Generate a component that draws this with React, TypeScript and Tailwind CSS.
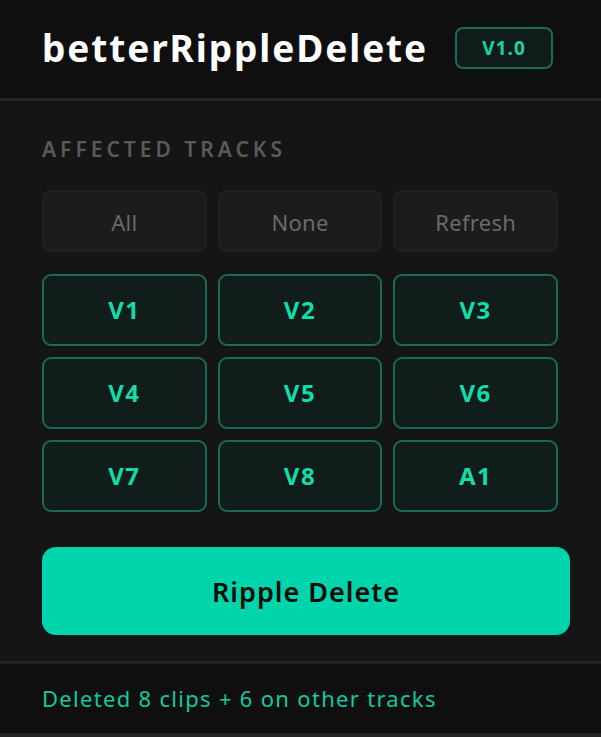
import React from 'react';

const tracks = ['V1', 'V2', 'V3', 'V4', 'V5', 'V6', 'V7', 'V8', 'A1'];

export default function App() {
    return (
        <div className="min-h-screen bg-[#151515] font-['Noto_Sans','Open_Sans',sans-serif] flex flex-col">
            <header className="h-[101px] bg-[#0f0f0f] border-b-[3px] border-[#232323] flex items-center px-[42px] gap-[27px]">
                <h1 className="text-[37px] font-bold text-white leading-none tracking-[1.9px] -mt-[4px]">betterRippleDelete</h1>
                <span className="h-[42px] w-[98px] -mt-[2px] flex items-center justify-center rounded-[8px] border-2 border-[#176b58] bg-[#0f1c19] text-[#19d3a2] text-[19px] tracking-[1px] font-bold">
                    V1.0
                </span>
            </header>

            <main className="px-[42px] pt-[36px]">
                <div className="text-[21px] leading-[24px] font-semibold tracking-[4px] text-[#5a5a5a]">AFFECTED TRACKS</div>

                <div className="mt-[29px] w-[516px] grid grid-cols-3 gap-x-[11px]">
                    {['All', 'None', 'Refresh'].map((b) => (
                        <button key={b} className="h-[62px] pt-[3px] rounded-[9px] border-2 border-[#212121] bg-[#1c1c1c] text-[#6a6a6a] text-[22px] tracking-[0.3px]">
                            {b}
                        </button>
                    ))}
                </div>

                <div className="mt-[22px] w-[516px] grid grid-cols-3 gap-x-[11px] gap-y-[11px]">
                    {tracks.map((t) => (
                        <button key={t} className="h-[72px] rounded-[9px] border-2 border-[#176b58] bg-[#111d1b] text-[#12dcaa] text-[24px] tracking-[1.5px] font-bold">
                            {t}
                        </button>
                    ))}
                </div>

                <button className="mt-[35px] w-[528px] h-[88px] pt-[2px] rounded-[14px] bg-[#00d4ab] text-[#0a0a0a] text-[27px] tracking-[1px] font-semibold">
                    Ripple Delete
                </button>
            </main>

            <footer className="mt-[26px] h-[76px] bg-[#0f0f0f] border-t-[3px] border-b-[4px] border-[#232323] flex items-center px-[42px]">
                <span className="text-[22px] tracking-[1.3px] text-[#14c9a0]">Deleted 8 clips + 6 on other tracks</span>
            </footer>
        </div>
    );
}
